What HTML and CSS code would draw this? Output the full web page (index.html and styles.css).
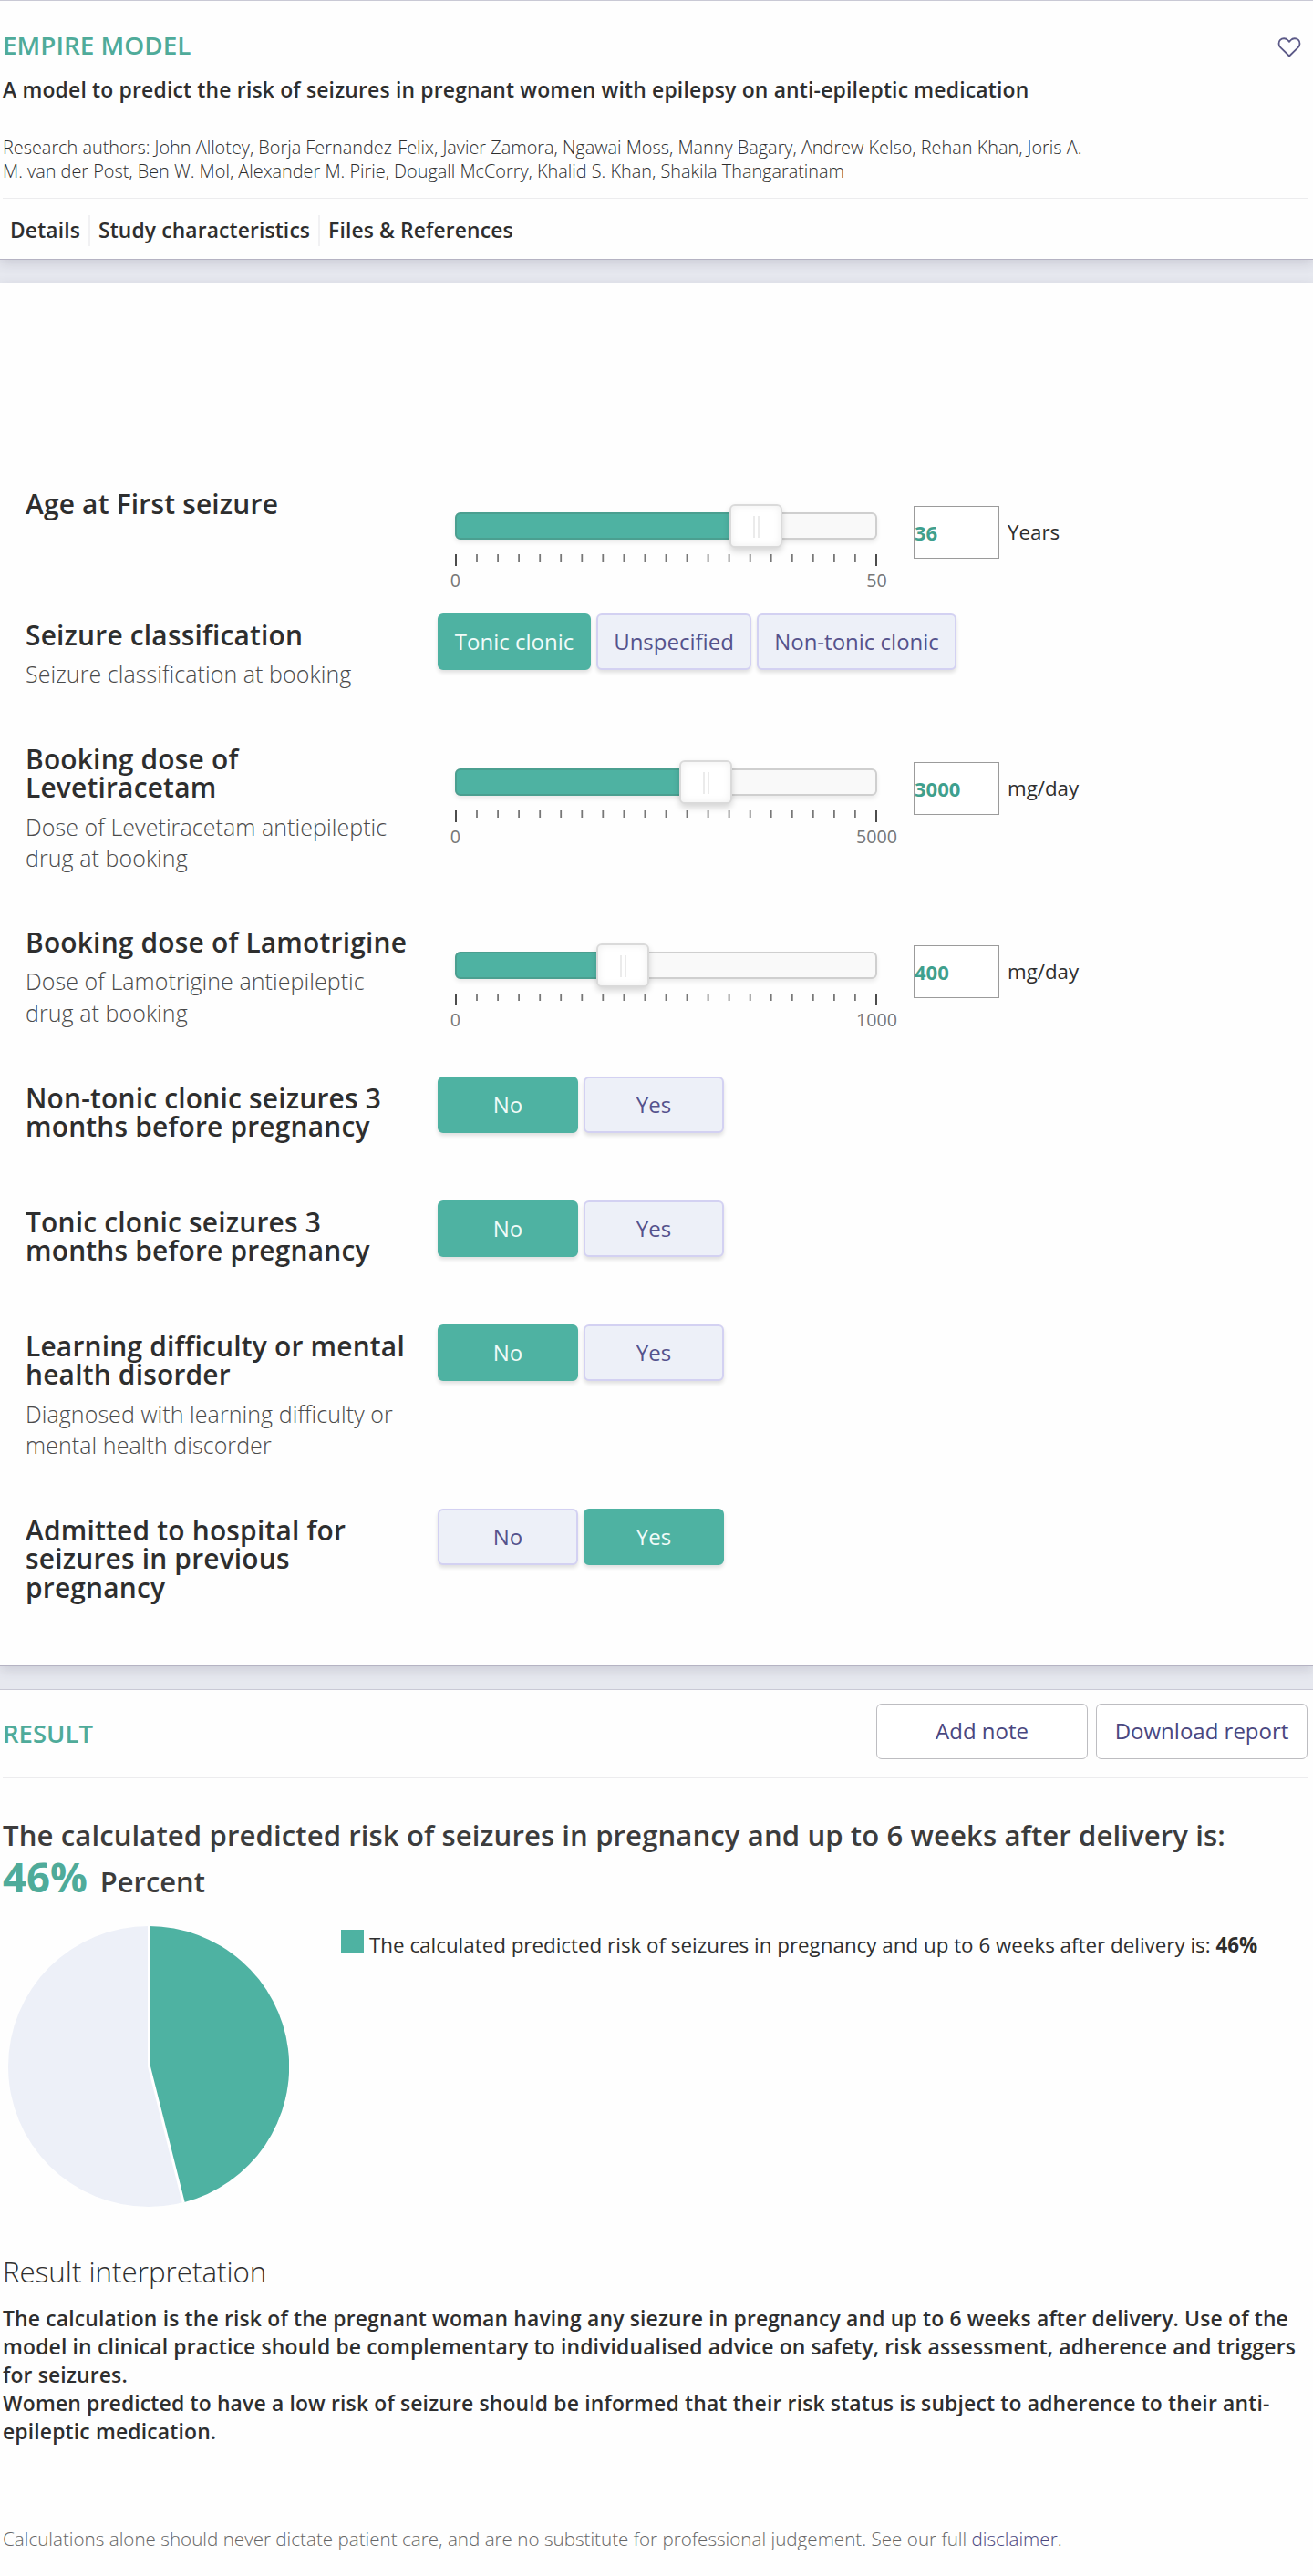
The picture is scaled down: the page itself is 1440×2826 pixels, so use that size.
FILE: index.html
```
<!DOCTYPE html>
<html lang="en">
<head>
	<meta charset="utf-8">
	<title>EMPIRE MODEL</title>
	<link rel="stylesheet" href="styles.css">
</head>
<body>

<!-- tick marks shared by the sliders -->
<svg class="defs" width="0" height="0">
	<symbol id="ticks" viewBox="0 0 464 13">
		<path d="M1 0v13M462 0v13" stroke="#4c4c4c" stroke-width="2"/>
		<path d="M24 0v8M47.1 0v8M70.1 0v8M93.2 0v8M116.2 0v8M139.3 0v8M162.3 0v8M185.4 0v8M208.4 0v8M231.5 0v8M254.5 0v8M277.6 0v8M300.6 0v8M323.7 0v8M346.7 0v8M369.8 0v8M392.8 0v8M415.9 0v8M438.9 0v8" stroke="#777" stroke-width="1.8"/>
	</symbol>
</svg>

<div class="panel header">
	<div class="title-row">
		<h1>EMPIRE MODEL</h1>
		<svg class="heart" width="26" height="22" viewBox="0 0 26 22"><path d="M13 20.5L3.4 11.2C1 8.8 .9 5 3 2.9C5.4 .6 9.2 .8 11.3 3L13 4.9L14.7 3C16.8 .8 20.6 .6 23 2.9C25.1 5 25 8.8 22.6 11.2Z" fill="none" stroke="#5b5987" stroke-width="1.8" stroke-linejoin="round"/></svg>
	</div>
	<p class="subtitle">A model to predict the risk of seizures in pregnant women with epilepsy on anti-epileptic medication</p>
	<p class="authors">Research authors: John Allotey, Borja Fernandez-Felix, Javier Zamora, Ngawai Moss, Manny Bagary, Andrew Kelso, Rehan Khan, Joris A. M. van der Post, Ben W. Mol, Alexander M. Pirie, Dougall McCorry, Khalid S. Khan, Shakila Thangaratinam</p>
	<div class="tabs">
		<a>Details</a>
		<a>Study characteristics</a>
		<a>Files &amp; References</a>
	</div>
</div>

<form class="panel questions" action="." onsubmit="return false">
	<div class="row h144">
		<div class="label"><h3>Age at First seizure</h3></div>
		<div class="control slide first">
			<div class="slider">
				<div class="track"><div class="fill" style="width:72%"></div><div class="handle" style="left:72%"></div></div>
				<svg class="ticks" width="464" height="13"><use href="#ticks"/></svg>
				<div class="scale"><span>0</span><span>50</span></div>
			</div>
			<input class="num" type="text" value="36">
			<span class="unit">Years</span>
		</div>
	</div>

	<div class="row h136">
		<div class="label"><h3>Seizure classification</h3><p>Seizure classification at booking</p></div>
		<div class="control">
			<button class="btn on w1">Tonic clonic</button>
			<button class="btn w2">Unspecified</button>
			<button class="btn w3">Non-tonic clonic</button>
		</div>
	</div>

	<div class="row h201">
		<div class="label"><h3>Booking dose of Levetiracetam</h3><p>Dose of Levetiracetam antiepileptic drug at booking</p></div>
		<div class="control slide">
			<div class="slider">
				<div class="track"><div class="fill" style="width:60%"></div><div class="handle" style="left:60%"></div></div>
				<svg class="ticks" width="464" height="13"><use href="#ticks"/></svg>
				<div class="scale"><span>0</span><span>5000</span></div>
			</div>
			<input class="num" type="text" value="3000">
			<span class="unit">mg/day</span>
		</div>
	</div>

	<div class="row h171">
		<div class="label"><h3>Booking dose of Lamotrigine</h3><p>Dose of Lamotrigine antiepileptic drug at booking</p></div>
		<div class="control slide">
			<div class="slider">
				<div class="track"><div class="fill" style="width:40%"></div><div class="handle" style="left:40%"></div></div>
				<svg class="ticks" width="464" height="13"><use href="#ticks"/></svg>
				<div class="scale"><span>0</span><span>1000</span></div>
			</div>
			<input class="num" type="text" value="400">
			<span class="unit">mg/day</span>
		</div>
	</div>

	<div class="row h136">
		<div class="label"><h3>Non-tonic clonic seizures 3 months before pregnancy</h3></div>
		<div class="control">
			<button class="btn on">No</button>
			<button class="btn">Yes</button>
		</div>
	</div>

	<div class="row h136">
		<div class="label"><h3>Tonic clonic seizures 3<br>months before pregnancy</h3></div>
		<div class="control">
			<button class="btn on">No</button>
			<button class="btn">Yes</button>
		</div>
	</div>

	<div class="row h202">
		<div class="label"><h3>Learning difficulty or mental health disorder</h3><p>Diagnosed with learning difficulty or mental health discorder</p></div>
		<div class="control">
			<button class="btn on">No</button>
			<button class="btn">Yes</button>
		</div>
	</div>

	<div class="row h172">
		<div class="label"><h3>Admitted to hospital for seizures in previous pregnancy</h3></div>
		<div class="control">
			<button class="btn">No</button>
			<button class="btn on">Yes</button>
		</div>
	</div>
</form>

<div class="panel result">
	<div class="result-head">
		<h1>RESULT</h1>
		<div class="actions">
			<button class="outline">Add note</button>
			<button class="outline">Download report</button>
		</div>
	</div>
	<h2>The calculated predicted risk of seizures in pregnancy and up to 6 weeks after delivery is:</h2>
	<div class="score"><b>46%</b><span>Percent</span></div>
	<div class="chart">
		<svg class="pie" width="308" height="308" viewBox="0 0 308 308">
			<circle cx="154" cy="154" r="154" fill="#edf0f8"/>
			<path d="M154 154V0A154 154 0 0 1 192.3 303.2Z" fill="#4eb2a2"/>
			<path d="M154.5 0V154L192.3 303.5" fill="none" stroke="#fff" stroke-width="3"/>
		</svg>
		<div class="legend">
			<span class="swatch"></span>
			<span class="legend-text">The calculated predicted risk of seizures in pregnancy and up to 6 weeks after delivery is: <b>46%</b></span>
		</div>
	</div>
	<h4>Result interpretation</h4>
	<p class="interp">The calculation is the risk of the pregnant woman having any siezure in pregnancy and up to 6 weeks after delivery. Use of the model in clinical practice should be complementary to individualised advice on safety, risk assessment, adherence and triggers for seizures.<br>Women predicted to have a low risk of seizure should be informed that their risk status is subject to adherence to their anti-epileptic medication.</p>
	<p class="foot">Calculations alone should never dictate patient care, and are no substitute for professional judgement. See our full <a>disclaimer</a>.</p>
</div>

</body>
</html>
```
FILE: styles.css
```
* {
	box-sizing: border-box;
}
body {
	margin: 0;
	background: #e6e8ef;
	color: #2e2e2e;
	font-family: "Open Sans", "Liberation Sans", sans-serif;
}
h1, h2, h3, h4, p {
	margin: 0;
	font-weight: 600;
}
button, input {
	font-family: inherit;
	margin: 0;
}
.defs {
	display: block;
}
.panel {
	background: #fefefe;
	border-top: 1px solid #c9c9d5;
	border-bottom: 1px solid #b5b3c3;
	box-shadow: 0 4px 12px rgba(70, 60, 90, 0.16);
	margin-bottom: 25px;
}

/* header */
.header {
	height: 285px;
	padding: 29px 6px 0 3px;
}
h1 {
	font-size: 27.9px;
	line-height: 38px;
	color: #4fab9a;
}
.title-row {
	display: flex;
	justify-content: space-between;
}
.heart {
	margin: 11px 7px 0 0;
}
.subtitle {
	margin-top: 15px;
	font-size: 22.9px;
	line-height: 32px;
	letter-spacing: 0.18px;
}
.authors {
	max-width: 1195px;
	margin-top: 34px;
	font-size: 19.88px;
	font-weight: 300;
	line-height: 26px;
}
.tabs {
	display: flex;
	margin-top: 16px;
	padding: 18px 0 0 8px;
	border-top: 1px solid #ececee;
}
.tabs a {
	padding: 0 9px;
	border-left: 2px solid #f1f1f3;
	font-size: 22.8px;
	font-weight: 600;
	line-height: 34px;
	letter-spacing: 0.15px;
}
.tabs a:first-child {
	padding-left: 0;
	border-left: 0;
}

/* questions */
.questions {
	height: 1518px;
	padding: 218px 0 0 28px;
}
.row {
	display: grid;
	grid-template-columns: 424px 1fr;
	column-gap: 28px;
}
.h144 { height: 144px; }
.h136 { height: 136px; }
.h171 { height: 171px; }
.h172 { height: 172px; }
.h201 { height: 201px; }
.h202 { height: 202px; }
.label {
	padding-top: 8px;
}
.label h3 {
	font-size: 29.9px;
	line-height: 31.3px;
	letter-spacing: 0.2px;
}
.label p {
	margin-top: 10px;
	font-size: 25px;
	font-weight: 300;
	line-height: 34.5px;
	letter-spacing: 0.07px;
	color: #4a4a4a;
}
.control {
	display: flex;
	align-items: flex-start;
	gap: 6px;
}
.btn {
	width: 154px;
	height: 62px;
	padding: 0 0 2px;
	border: 2px solid #d3d1f2;
	border-radius: 6px;
	background: #edf0f8;
	box-shadow: 0 3px 4px rgba(0, 0, 0, 0.12);
	color: #55528c;
	font-size: 24px;
}
.btn.on {
	background: #4eb2a2;
	border-color: #4eb2a2;
	color: #f1fbf9;
}
.w1 { width: 168px; }
.w2 { width: 170px; }
.w3 { width: 219px; }

.slide {
	gap: 0;
	padding: 27px 0 0 19px;
}
.slide.first {
	padding-top: 26px;
}
.slider {
	width: 463px;
	padding-top: 7px;
}
.track {
	position: relative;
	height: 30px;
	border: 2px solid #cfcfcf;
	border-radius: 6px;
	background: #f9f9f9;
	box-shadow: 0 3px 5px rgba(0, 0, 0, 0.08);
}
.fill {
	height: 30px;
	margin: -2px;
	border: 2px solid #4b9f90;
	border-radius: 6px;
	background: #4eb2a2;
}
.handle {
	position: absolute;
	top: -11px;
	width: 58px;
	height: 48px;
	margin-left: -31px;
	border: 2px solid #dadada;
	border-radius: 6px;
	background: linear-gradient(#ebebeb, #ebebeb) 24px 11px / 2px 24px no-repeat, linear-gradient(#ebebeb, #ebebeb) 29px 11px / 2px 24px no-repeat, #fff;
	box-shadow: 0 4px 7px rgba(0, 0, 0, 0.16), inset 0 0 8px rgba(0, 0, 0, 0.07);
}
.ticks {
	display: block;
	margin-top: 16px;
}
.scale {
	display: flex;
	justify-content: space-between;
	margin: 3px -30px 0;
	font-size: 19.7px;
	line-height: 26px;
	color: #777;
}
.scale span {
	width: 61px;
	text-align: center;
}
.num {
	width: 94px;
	height: 58px;
	margin-left: 40px;
	padding: 0;
	border: 1px solid #9b9b9b;
	border-radius: 0;
	background: #fff;
	color: #3fa08e;
	font-size: 22px;
	font-weight: 700;
	line-height: 56px;
}
.unit {
	margin-left: 9px;
	font-size: 22.3px;
	line-height: 58px;
}

/* result */
.result {
	height: 973px;
	margin: 0;
	padding: 15px 6px 0 3px;
	border-bottom: 0;
	box-shadow: none;
}
.result-head {
	display: flex;
	justify-content: space-between;
	height: 82px;
	border-bottom: 1px solid #ececee;
}
.result-head h1 {
	padding-top: 14px;
	font-size: 27.5px;
}
.actions {
	display: flex;
	gap: 9px;
}
.outline {
	width: 232px;
	height: 61px;
	padding: 0 0 2px;
	border: 1px solid #bdbdc1;
	border-radius: 6px;
	background: #fff;
	color: #4a477f;
	font-size: 24px;
}
h2 {
	margin-top: 41px;
	font-size: 31.1px;
	line-height: 42px;
	letter-spacing: 0.1px;
	color: #3c3c3c;
}
.score {
	display: flex;
	align-items: baseline;
	gap: 14px;
	height: 48px;
	color: #3c3c3c;
	font-size: 30.9px;
	font-weight: 600;
}
.score b {
	color: #4fab9a;
	font-size: 45.4px;
	font-weight: 700;
	line-height: 48px;
}
.score span {
	line-height: 1;
}
.chart {
	display: flex;
	margin-top: 31px;
	padding-left: 6px;
}
.legend {
	display: flex;
	gap: 6px;
	margin: 4px 0 0 57px;
	font-size: 22.36px;
	line-height: 32px;
}
.legend-text {
	padding-top: 1px;
}
.swatch {
	width: 25px;
	height: 25px;
	background: #4eb2a2;
}
h4 {
	margin-top: 50px;
	font-size: 31.3px;
	font-weight: 300;
	line-height: 42px;
}
.interp {
	margin-top: 15px;
	font-size: 22.9px;
	line-height: 31.1px;
	letter-spacing: 0.16px;
}
.foot {
	margin-top: 88px;
	font-size: 20.64px;
	font-weight: 300;
	line-height: 28px;
	color: #666;
}
.foot a {
	color: #4a477f;
}
```
